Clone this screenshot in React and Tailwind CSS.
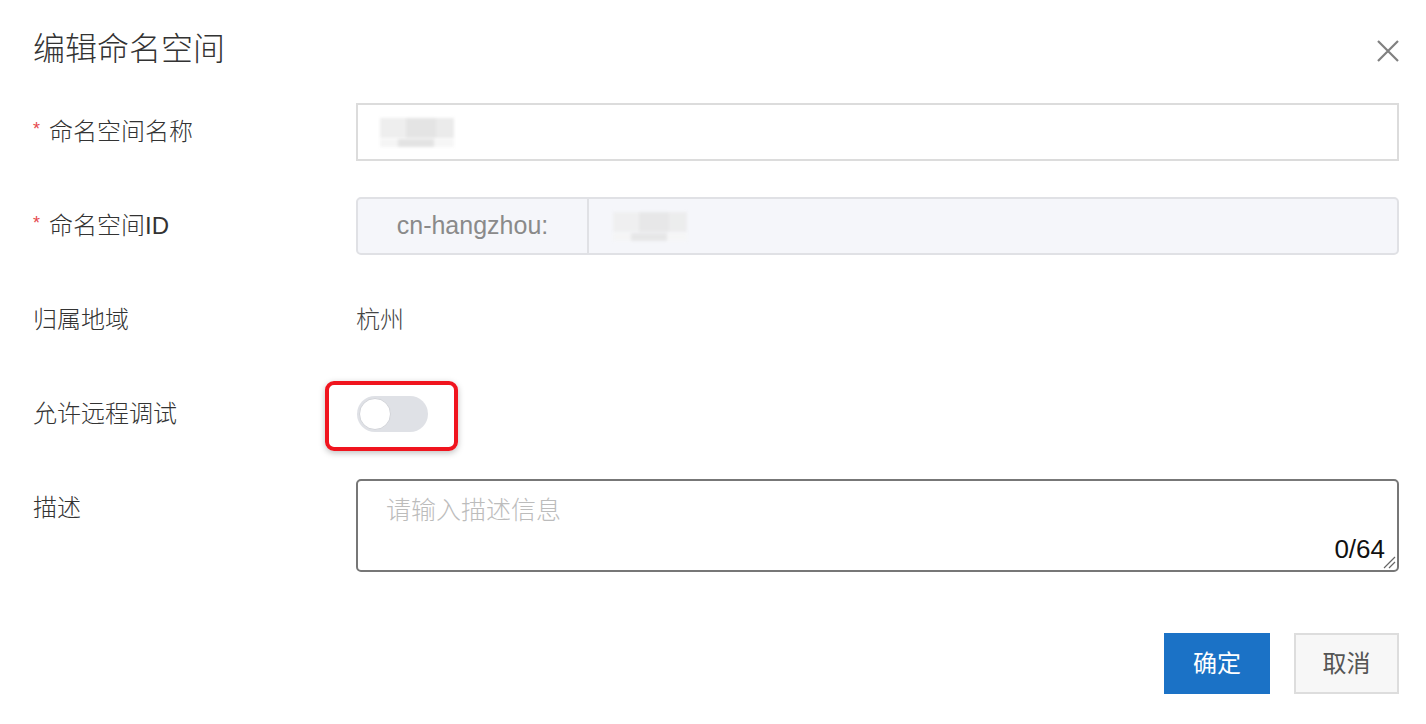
import React from 'react';

const font = { fontFamily: '"Liberation Sans", "Noto Sans CJK SC", sans-serif' };

function Label({ required, children }) {
  return (
    <div className="w-[323px] shrink-0 h-[58px] flex items-center text-[24px] text-[#333]">
      {required && <span className="text-[#e5484d] text-[18px] mr-[9px] -mt-[6px]">*</span>}
      {children}
    </div>
  );
}

function Blurred({ className }) {
  return (
    <div className={`flex flex-col gap-[1px] blur-[1.5px] ${className}`}>
      <div className="flex">
        <div className="w-[26px] h-[20px] bg-[#eeeeee]" />
        <div className="w-[30px] h-[20px] bg-[#e4e4e4]" />
        <div className="w-[18px] h-[20px] bg-[#ebebeb]" />
      </div>
      <div className="flex">
        <div className="w-[18px] h-[8px] bg-[#f5f5f5]" />
        <div className="w-[36px] h-[8px] bg-[#e3e3e3]" />
        <div className="w-[20px] h-[8px] bg-[#f6f6f6]" />
      </div>
    </div>
  );
}

export default function App() {
  return (
    <div className="w-[1426px] h-[724px] bg-white pl-[33px] pr-[27px] pt-[29px] relative font-light" style={font}>
      {/* 标题 */}
      <div className="flex items-center justify-between h-[40px]">
        <h1 className="text-[32px] text-[#333] leading-none">编辑命名空间</h1>
        <svg width="22" height="22" viewBox="0 0 22 22" className="mt-[4px]">
          <path d="M1 1 L21 21 M21 1 L1 21" stroke="#808080" strokeWidth="2.2" />
        </svg>
      </div>

      <div className="flex flex-col gap-[36px] mt-[34px]">
        {/* 名称 */}
        <div className="flex items-center">
          <Label required>命名空间名称</Label>
          <div className="flex-1 h-[58px] border-2 border-[#dcdcdc] flex items-center pl-[22px]">
            <Blurred />
          </div>
        </div>

        {/* ID */}
        <div className="flex items-center">
          <Label required>命名空间ID</Label>
          <div className="flex-1 h-[58px] border-2 border-[#e0e1e5] rounded-[5px] bg-[#f5f6fa] flex">
            <div className="w-[231px] shrink-0 flex items-center justify-center border-r-2 border-[#e0e1e5] text-[25px] text-[#8a8a8a]">
              cn-hangzhou:
            </div>
            <div className="flex items-center pl-[24px]">
              <Blurred className="opacity-80" />
            </div>
          </div>
        </div>

        {/* 地域 */}
        <div className="flex items-center">
          <Label>归属地域</Label>
          <span className="text-[24px] text-[#444]">杭州</span>
        </div>

        {/* 远程调试 */}
        <div className="flex items-center">
          <Label>允许远程调试</Label>
          <div className="relative ml-[1px]">
            <div className="w-[71px] h-[36px] rounded-full bg-[#dfe1e6] p-[2px] flex items-center">
              <div className="w-[32px] h-[32px] rounded-full bg-white border border-[#d2d4d9]" />
            </div>
            <div className="absolute left-[-32px] top-[-15px] w-[133px] h-[70px] border-[4px] border-[#f0141e] rounded-[9px] shadow-[0_2px_6px_rgba(0,0,0,0.25)]" />
          </div>
        </div>

        {/* 描述 */}
        <div className="flex items-start">
          <Label>描述</Label>
          <div className="flex-1 h-[93px] border-2 border-[#777] rounded-[5px] relative">
            <span className="absolute left-[28px] top-[11px] text-[25px] text-[#bcbcbc]">请输入描述信息</span>
            <span className="absolute right-[12px] bottom-[8px] text-[26px] text-[#111] leading-none font-normal">0/64</span>
            <svg width="14" height="14" viewBox="0 0 14 14" className="absolute right-[1px] bottom-[1px]">
              <path d="M2 13 L13 2 M7 13 L13 7" stroke="#666" strokeWidth="1.2" />
            </svg>
          </div>
        </div>
      </div>

      {/* 按钮 */}
      <div className="flex justify-end gap-[24px] mt-[61px]">
        <button className="w-[106px] h-[61px] bg-[#1b72c6] text-white text-[24px] font-normal">确定</button>
        <button className="w-[105px] h-[61px] bg-[#f7f7f7] border-2 border-[#dddddd] text-[#555] text-[24px] font-normal">取消</button>
      </div>
    </div>
  );
}
